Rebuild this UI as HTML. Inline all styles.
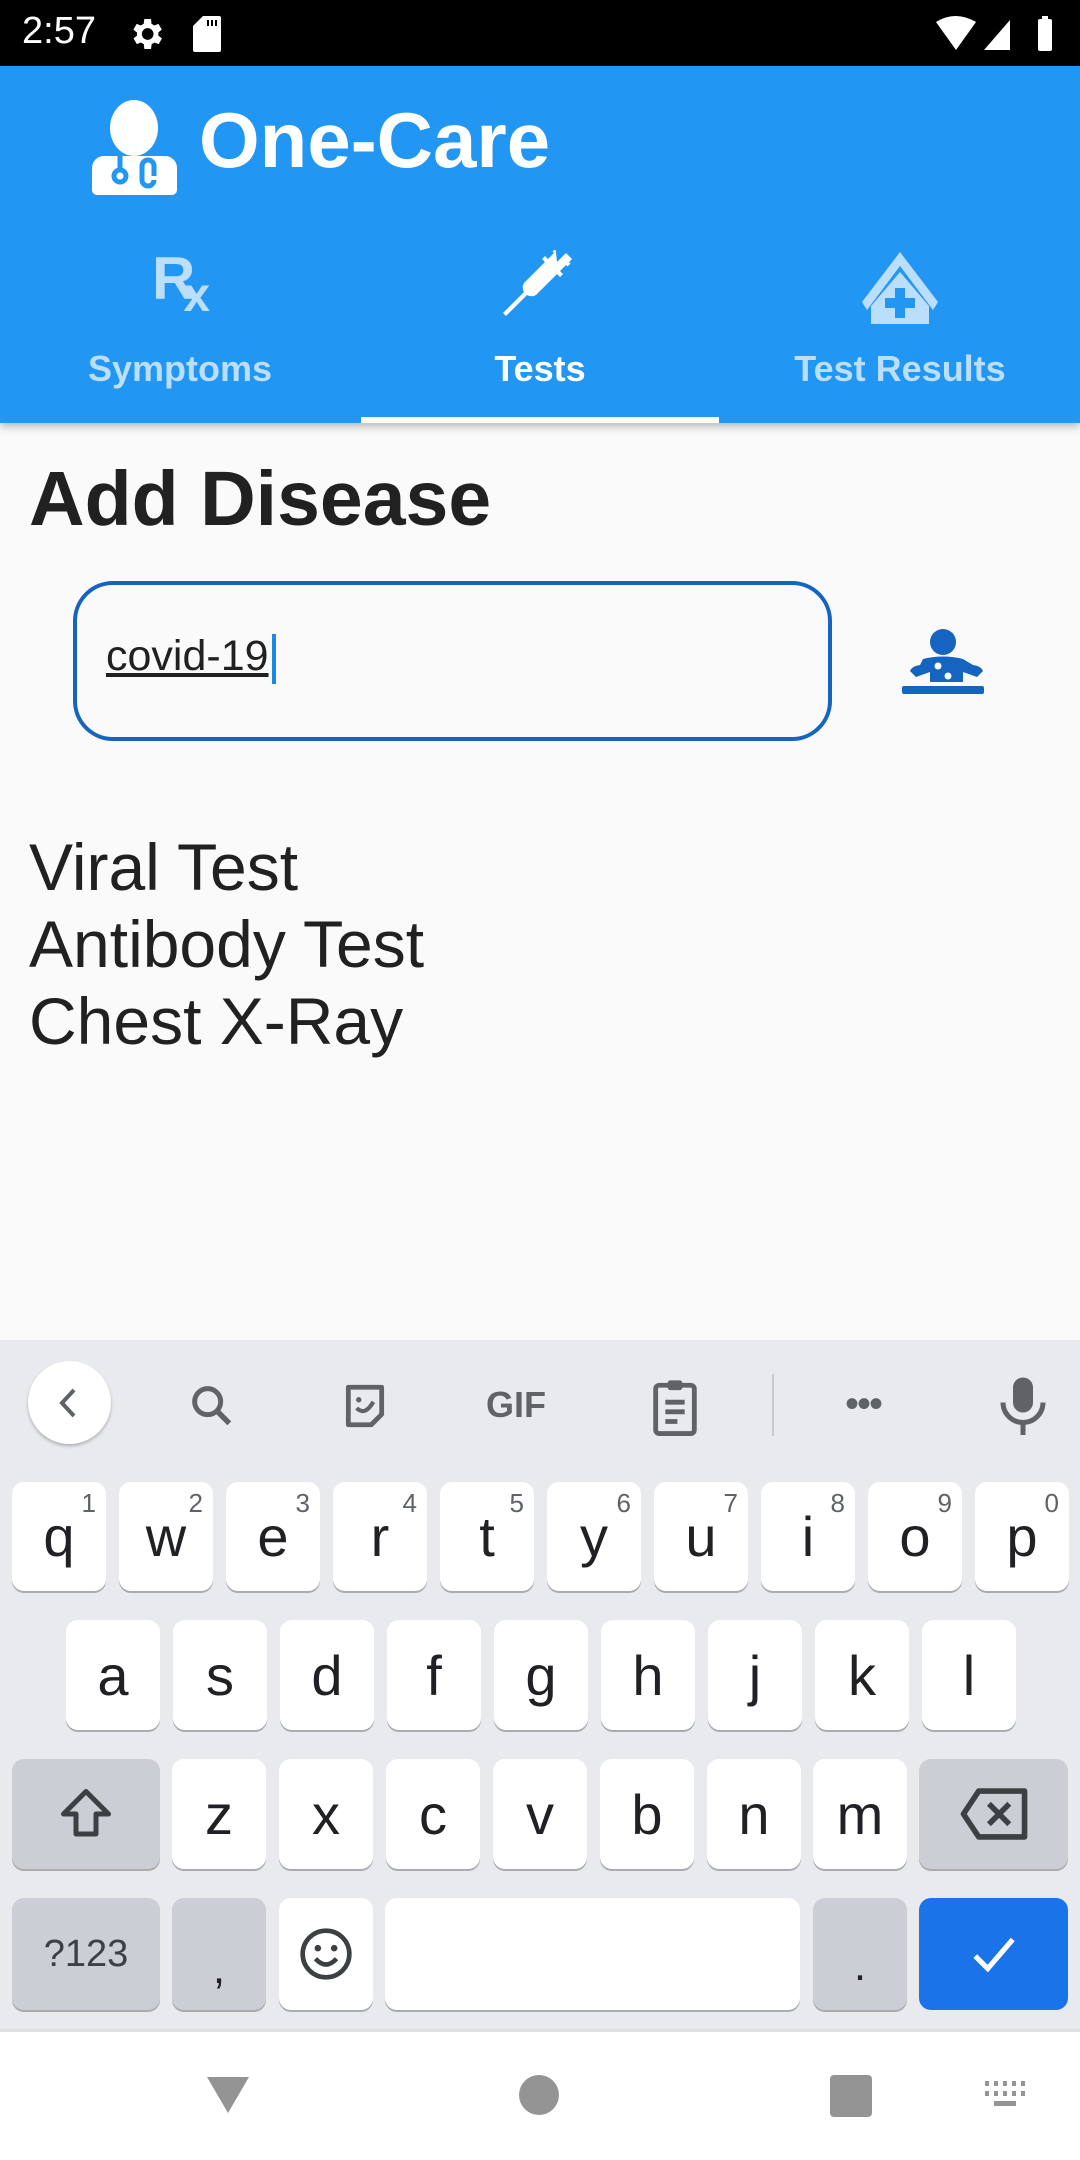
<!DOCTYPE html>
<html><head><meta charset="utf-8"><style>
*{margin:0;padding:0;box-sizing:border-box}
body{width:1080px;height:2160px;position:relative;background:#fafafa;font-family:"Liberation Sans",sans-serif;overflow:hidden}
.a{position:absolute}
.k{position:absolute;background:#fff;border-radius:12px;box-shadow:0 2px 0 #a9abae;font-size:56px;color:#202124;display:flex;align-items:center;justify-content:center}
.k.g{background:#cbced4}
.k sup{position:absolute;top:6px;right:10px;font-size:26px;color:#5f6368}
</style></head><body>
<div class="a" style="left:0;top:0;width:1080px;height:66px;background:#000"></div>
<div class="a" style="left:22px;top:10px;color:#fff;font-size:38px">2:57</div>
<svg class="a" style="left:126px;top:14px" width="40" height="40" viewBox="0 0 24 24"><path fill="#fff" d="M19.4 13a7.5 7.5 0 000-2l2.1-1.6-2-3.5-2.5 1a7 7 0 00-1.7-1L15 3h-4l-.4 2.9a7 7 0 00-1.7 1l-2.5-1-2 3.5L6.6 11a7.5 7.5 0 000 2l-2.1 1.6 2 3.5 2.5-1a7 7 0 001.7 1L11 21h4l.4-2.9a7 7 0 001.7-1l2.5 1 2-3.5zM13 15.5a3.5 3.5 0 110-7 3.5 3.5 0 010 7z"/></svg>
<svg class="a" style="left:193px;top:16px" width="28" height="36" viewBox="0 0 14 18"><path fill="#fff" d="M5 0h8a1 1 0 011 1v16a1 1 0 01-1 1H1a1 1 0 01-1-1V5z"/><path fill="#000" d="M7 2h1v3H7zM9 2h1v3H9zM11 2h1v3h-1z"/></svg>
<svg class="a" style="left:936px;top:16px" width="118" height="36" viewBox="0 0 118 36"><path fill="#fff" d="M0 6Q19-6 40 6L20 34z"/><path fill="#fff" d="M48 34L74 4v30z"/><rect x="102" y="3" width="14" height="32" rx="2" fill="#fff"/><rect x="106" y="0" width="6" height="4" fill="#fff"/></svg>
<div class="a" style="left:0;top:66px;width:1080px;height:357px;background:#2196f3;box-shadow:0 4px 8px rgba(0,0,0,.25)"></div>
<svg class="a" style="left:92px;top:100px" width="85" height="95" viewBox="0 0 85 95"><ellipse cx="42" cy="28" rx="24" ry="28" fill="#fff"/><path fill="#fff" d="M12 56h60a12 12 0 0113 12v22a5 5 0 01-5 5H5a5 5 0 01-5-5V68a12 12 0 0112-12z"/><g fill="none" stroke="#2196f3" stroke-width="5"><path d="M28 56v12"/><circle cx="28" cy="76" r="6"/><path d="M50 80v-14a6 6 0 0112 0v10M50 80a6 6 0 0012 0"/></g></svg>
<div class="a" style="left:199px;top:98px;color:#fff;font-size:78px;font-weight:bold;line-height:84px">One-Care</div>
<div class="a" style="left:152px;top:246px;color:#bbdefb;font-size:60px;font-weight:bold;line-height:66px">R<span style="font-size:48px;position:relative;top:12px;left:-12px">x</span></div>
<svg class="a" style="left:503px;top:250px" width="72" height="72" viewBox="0 0 24 24"><path fill="#fff" d="M21 1l2 2-1 1 .5.5-1 1L21 5l-2 2 1 1-1 1-1-1-7 7a3 3 0 01-3 0l-1 1-6 6-1-1 6-6 1-1a3 3 0 010-3l7-7-1-1 1-1 1 1 2-2-.5-.5 1-1L18 4z"/></svg>
<svg class="a" style="left:862px;top:252px" width="76" height="72" viewBox="0 0 76 72"><path fill="#bbdefb" d="M38 0L76 50l-5 8L38 14 5 58 0 50z"/><path fill="#bbdefb" d="M9 54L38 20l29 34v18H9z"/><path fill="#2196f3" d="M33 36h10v10h10v10H43v10H33V56H23V46h10z"/></svg>
<div class="a" style="left:0;top:348px;width:360px;text-align:center;color:#bbdefb;font-size:36px;font-weight:bold">Symptoms</div>
<div class="a" style="left:360px;top:348px;width:360px;text-align:center;color:#fff;font-size:36px;font-weight:bold">Tests</div>
<div class="a" style="left:720px;top:348px;width:360px;text-align:center;color:#bbdefb;font-size:36px;font-weight:bold">Test Results</div>
<div class="a" style="left:361px;top:417px;width:358px;height:6px;background:#fff"></div>
<div class="a" style="left:29px;top:455px;font-size:77px;font-weight:bold;color:#212121">Add Disease</div>
<div class="a" style="left:73px;top:581px;width:759px;height:160px;border:4px solid #1565c0;border-radius:40px"></div>
<div class="a" style="left:106px;top:632px;font-size:43px;color:#212121;text-decoration:underline">covid-19</div>
<div class="a" style="left:272px;top:634px;width:4px;height:50px;background:#1e88e5"></div>
<svg class="a" style="left:900px;top:626px" width="88" height="70" viewBox="0 0 88 70"><circle cx="43" cy="16" r="13" fill="#1565c0"/><path fill="#1565c0" d="M23 33q20-5 40 0l10 6q8 1 10 6l-6 6-14-5v10H30V46l-14 5-6-6q2-5 10-6z"/><rect x="2" y="60" width="82" height="8" rx="2" fill="#1565c0"/><circle cx="38" cy="40" r="3.5" fill="#fafafa"/><circle cx="48" cy="50" r="3.5" fill="#fafafa"/></svg>
<div class="a" style="left:29px;top:829px;font-size:66px;line-height:77px;color:#212121">Viral Test<br>Antibody Test<br>Chest X-Ray</div>
<div class="a" style="left:0;top:1340px;width:1080px;height:692px;background:#e8eaed"></div>
<div class="a" style="left:28px;top:1361px;width:83px;height:83px;border-radius:50%;background:#fff;box-shadow:0 2px 3px rgba(0,0,0,.25)"></div>
<svg class="a" style="left:56px;top:1386px" width="24" height="34"><path d="M18 4L6 17l12 13" stroke="#5f6368" stroke-width="4" fill="none"/></svg>
<svg class="a" style="left:186px;top:1380px" width="52" height="52" viewBox="0 0 24 24"><circle cx="10" cy="10" r="6" stroke="#5f6368" stroke-width="2.3" fill="none"/><path d="M14.5 14.5L20 20" stroke="#5f6368" stroke-width="2.5"/></svg>
<svg class="a" style="left:340px;top:1381px" width="50" height="50" viewBox="0 0 24 24"><path d="M4 3h16v13l-5 5H4z" stroke="#5f6368" stroke-width="2.3" fill="none" stroke-linejoin="round"/><circle cx="9" cy="9" r="1.3" fill="#5f6368"/><path d="M8 13q4 4 8-3" stroke="#5f6368" stroke-width="2" fill="none"/></svg>
<div class="a" style="left:486px;top:1384px;font-size:36px;font-weight:bold;color:#5f6368">GIF</div>
<svg class="a" style="left:650px;top:1378px" width="50" height="58" viewBox="0 0 20 24"><rect x="2" y="3" width="16" height="20" rx="1.5" stroke="#5f6368" stroke-width="2" fill="none"/><rect x="7" y="1" width="6" height="4" rx="1" fill="#5f6368"/><path d="M6 10h8M6 14h8M6 18h5" stroke="#5f6368" stroke-width="2"/></svg>
<div class="a" style="left:772px;top:1374px;width:2px;height:62px;background:#c8cacd"></div>
<div class="a" style="left:845px;top:1382px;font-size:40px;color:#5f6368;letter-spacing:-2px">•••</div>
<svg class="a" style="left:998px;top:1375px" width="50" height="60" viewBox="0 0 20 24"><rect x="6" y="1" width="8" height="14" rx="4" fill="#5f6368"/><path d="M2 11a8 8 0 0016 0M10 19v5" stroke="#5f6368" stroke-width="2" fill="none"/></svg>
<div class="k" style="left:12px;top:1482px;width:94px;height:109px">q<sup>1</sup></div>
<div class="k" style="left:119px;top:1482px;width:94px;height:109px">w<sup>2</sup></div>
<div class="k" style="left:226px;top:1482px;width:94px;height:109px">e<sup>3</sup></div>
<div class="k" style="left:333px;top:1482px;width:94px;height:109px">r<sup>4</sup></div>
<div class="k" style="left:440px;top:1482px;width:94px;height:109px">t<sup>5</sup></div>
<div class="k" style="left:547px;top:1482px;width:94px;height:109px">y<sup>6</sup></div>
<div class="k" style="left:654px;top:1482px;width:94px;height:109px">u<sup>7</sup></div>
<div class="k" style="left:761px;top:1482px;width:94px;height:109px">i<sup>8</sup></div>
<div class="k" style="left:868px;top:1482px;width:94px;height:109px">o<sup>9</sup></div>
<div class="k" style="left:975px;top:1482px;width:94px;height:109px">p<sup>0</sup></div>
<div class="k" style="left:66px;top:1620px;width:94px;height:110px">a</div>
<div class="k" style="left:173px;top:1620px;width:94px;height:110px">s</div>
<div class="k" style="left:280px;top:1620px;width:94px;height:110px">d</div>
<div class="k" style="left:387px;top:1620px;width:94px;height:110px">f</div>
<div class="k" style="left:494px;top:1620px;width:94px;height:110px">g</div>
<div class="k" style="left:601px;top:1620px;width:94px;height:110px">h</div>
<div class="k" style="left:708px;top:1620px;width:94px;height:110px">j</div>
<div class="k" style="left:815px;top:1620px;width:94px;height:110px">k</div>
<div class="k" style="left:922px;top:1620px;width:94px;height:110px">l</div>
<div class="k g" style="left:12px;top:1759px;width:148px;height:110px"><svg width="60" height="60" viewBox="0 0 24 24"><path d="M12 3L3 12h5v8h8v-8h5z" stroke="#3c4043" stroke-width="2" fill="none" stroke-linejoin="round"/></svg></div>
<div class="k" style="left:172px;top:1759px;width:94px;height:110px">z</div>
<div class="k" style="left:279px;top:1759px;width:94px;height:110px">x</div>
<div class="k" style="left:386px;top:1759px;width:94px;height:110px">c</div>
<div class="k" style="left:493px;top:1759px;width:94px;height:110px">v</div>
<div class="k" style="left:600px;top:1759px;width:94px;height:110px">b</div>
<div class="k" style="left:707px;top:1759px;width:94px;height:110px">n</div>
<div class="k" style="left:813px;top:1759px;width:94px;height:110px">m</div>
<div class="k g" style="left:919px;top:1759px;width:149px;height:110px"><svg width="72" height="56" viewBox="0 0 28 22"><path d="M8 2h18v18H8L2 11z" stroke="#3c4043" stroke-width="2.2" fill="none" stroke-linejoin="round"/><path d="M12 7l8 8M20 7l-8 8" stroke="#3c4043" stroke-width="2.2"/></svg></div>
<div class="k g" style="left:12px;top:1898px;width:148px;height:112px;font-size:38px;color:#3c4043">?123</div>
<div class="k g" style="left:172px;top:1898px;width:94px;height:112px;font-size:44px;padding-top:30px">,</div>
<div class="k" style="left:279px;top:1898px;width:94px;height:112px"><svg width="56" height="56" viewBox="0 0 24 24"><circle cx="12" cy="12" r="10" stroke="#3c4043" stroke-width="2" fill="none"/><circle cx="8.5" cy="9.5" r="1.4" fill="#3c4043"/><circle cx="15.5" cy="9.5" r="1.4" fill="#3c4043"/><path d="M7.5 14q4.5 5 9 0" stroke="#3c4043" stroke-width="2" fill="none"/></svg></div>
<div class="k" style="left:385px;top:1898px;width:415px;height:112px"></div>
<div class="k g" style="left:813px;top:1898px;width:94px;height:112px;font-size:44px;padding-top:24px">.</div>
<div class="k" style="left:919px;top:1898px;width:149px;height:112px;background:#1a73e8;box-shadow:none"><svg width="50" height="50" viewBox="0 0 24 24"><path d="M3 13l6 6L21 5" stroke="#fff" stroke-width="2.5" fill="none"/></svg></div>
<div class="a" style="left:0;top:2029px;width:1080px;height:3px;background:#dfe0e2"></div>
<div class="a" style="left:0;top:2032px;width:1080px;height:128px;background:#fff"></div>
<svg class="a" style="left:205px;top:2075px" width="46" height="40"><path d="M2 2h42L23 38z" fill="#949494"/></svg>
<div class="a" style="left:519px;top:2075px;width:40px;height:40px;border-radius:50%;background:#949494"></div>
<div class="a" style="left:830px;top:2075px;width:42px;height:42px;border-radius:4px;background:#949494"></div>
<svg class="a" style="left:985px;top:2081px" width="44" height="32"><g fill="#949494"><rect x="0" y="0" width="4" height="5"/><rect x="9" y="0" width="4" height="5"/><rect x="18" y="0" width="4" height="5"/><rect x="27" y="0" width="4" height="5"/><rect x="36" y="0" width="4" height="5"/><rect x="0" y="10" width="4" height="5"/><rect x="9" y="10" width="4" height="5"/><rect x="18" y="10" width="4" height="5"/><rect x="27" y="10" width="4" height="5"/><rect x="36" y="10" width="4" height="5"/><rect x="9" y="20" width="22" height="5"/></g></svg>
</body></html>
